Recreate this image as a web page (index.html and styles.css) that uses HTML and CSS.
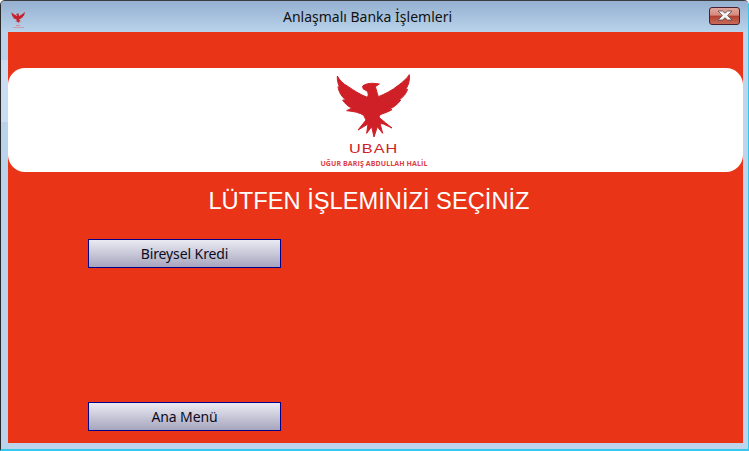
FILE: index.html
```html
<!DOCTYPE html>
<html lang="en">
<head>
  <meta charset="UTF-8">
  <title>Anlaşmalı Banka İşlemleri</title>
  <link rel="stylesheet" href="styles.css">
</head>
<body>
  <svg class="defs" width="0" height="0">
    <!-- eagle from the logo, used in the banner and the title bar -->
    <symbol id="eagle" viewBox="0 0 255 210">
      <path d="M22 18 C28 30 40 42 55 50 C70 60 90 74 112 82 C116 76 115 70 112 64 L99 56 L98 48 C104 42 120 39 130 40 L148 42 L136 50 C139 58 141 68 145 80 C165 72 185 62 205 46 C218 36 230 26 238 14 C240 30 236 46 226 60 L233 58 C228 72 218 84 206 90 L212 90 C204 102 192 112 178 117 L186 119 C174 126 160 130 150 134 L147 142 L166 158 L186 174 L160 162 L150 160 L158 190 L142 170 L132 201 L125 170 L110 190 L114 162 L84 180 L108 150 L101 136 C90 128 72 124 50 122 L66 114 C54 110 44 100 38 90 L48 90 C36 82 26 66 24 50 L30 54 C24 42 21 30 22 18 Z"/>
    </symbol>
  </svg>

  <div class="window">
    <div class="titlebar">
      <div class="app-icon">
        <svg class="app-eagle" aria-hidden="true"><use href="#eagle"/></svg>
        <span class="app-line"></span>
        <span class="app-line app-line-long"></span>
      </div>
      <div class="title">Anlaşmalı Banka İşlemleri</div>
      <div class="close">
        <svg width="16" height="11" viewBox="0 0 16 11">
          <path d="M1 1 H5.5 L8 3.2 L10.5 1 H15 L10.6 5.5 L15 10 H10.5 L8 7.8 L5.5 10 H1 L5.4 5.5 Z" fill="#f4f4f4" stroke="#5a4a50" stroke-width="0.8"/>
        </svg>
      </div>
    </div>

    <div class="frame">
      <div class="content">
        <div class="banner">
          <svg class="logo-eagle" aria-hidden="true"><use href="#eagle"/></svg>
          <div class="logo-name">UBAH</div>
          <div class="logo-sub">UĞUR BARIŞ ABDULLAH HALİL</div>
        </div>

        <h1 class="heading">LÜTFEN İŞLEMİNİZİ SEÇİNİZ</h1>

        <button class="btn">Bireysel Kredi</button>
        <button class="btn btn-bottom">Ana Menü</button>
      </div>
    </div>
  </div>
</body>
</html>
```

FILE: styles.css
```css
html, body {
  margin: 0;
  padding: 0;
  background: #fff;
}
body {
  width: 749px;
  height: 451px;
  overflow: hidden;
  font-family: "Noto Sans", sans-serif;
}
.defs {
  display: block;
  height: 0;
}
.window {
  box-sizing: border-box;
  width: 749px;
  height: 451px;
  display: flex;
  flex-direction: column;
  border-top: 1px solid #3c3c3c;
  border-left: 1px solid #2a2a2a;
  border-right: 1px solid #35c8ea;
  border-bottom: 2px solid #35c8ea;
  border-top-left-radius: 5px;
  border-top-right-radius: 5px;
  background: #bdd4ec;
}

/* Title bar */
.titlebar {
  height: 31px;
  flex: none;
  display: flex;
  align-items: center;
  padding: 0 8px 0 7px;
  background: linear-gradient(#95b0d0, #b9d3eb);
  border-top-left-radius: 4px;
  border-top-right-radius: 4px;
}
.app-icon {
  width: 20px;
  margin-top: 6px;
  display: flex;
  flex-direction: column;
  align-items: center;
  gap: 1px;
}
.app-eagle {
  width: 16px;
  height: 13px;
  fill: #c8202c;
}
.app-line {
  display: block;
  width: 4px;
  height: 1px;
  background: #d98a98;
}
.app-line-long {
  width: 11px;
  background: #cf9aae;
}
.title {
  flex: 1;
  text-align: center;
  font-size: 14px;
  color: #111;
  padding-right: 2px;
}
.close {
  box-sizing: border-box;
  width: 31px;
  height: 18px;
  margin-top: -2px;
  display: flex;
  align-items: center;
  justify-content: center;
  border: 1px solid #4a2030;
  border-radius: 3px;
  background: linear-gradient(#e0a59c 0%, #d58a7e 45%, #b0402f 50%, #c96a5a 100%);
}

/* Frame around the red content */
.frame {
  flex: 1;
  min-height: 0;
  display: flex;
  padding: 0 5px 6px 7px;
  background: linear-gradient(#bad3ec 28px, #c9dcf1 28px, #c9dcf1 90px, #bad3ec 90px) no-repeat left / 7px 100%;
}
.content {
  flex: 1;
  display: flex;
  flex-direction: column;
  padding: 36px 0 12px;
  background: #e93417;
}

.banner {
  height: 104px;
  flex: none;
  display: flex;
  flex-direction: column;
  align-items: center;
  padding-right: 6px;
  background: #fff;
  border-radius: 17px;
}
.logo-eagle {
  width: 85px;
  height: 70px;
  margin-top: 2px;
  flex: none;
  fill: #cf2027;
  stroke: #cf2027;
  stroke-width: 3px;
  stroke-linejoin: round;
}
.logo-name {
  margin: 1px 0 0 3px;
  font-family: "Liberation Sans", sans-serif;
  font-size: 13px;
  line-height: 15px;
  letter-spacing: 0.8px;
  transform: scaleX(1.25);
  color: #cf2027;
}
.logo-sub {
  margin: 3px 0 0 3px;
  font-family: "Open Sans", sans-serif;
  font-weight: 700;
  font-size: 7px;
  line-height: 9px;
  letter-spacing: 0.1px;
  color: #dc4044;
}

.heading {
  margin: 15px 0 24px;
  padding-right: 13px;
  text-align: center;
  font-family: "Liberation Sans", sans-serif;
  font-weight: 400;
  font-size: 23.7px;
  line-height: 28px;
  color: #fff;
}

.btn {
  box-sizing: border-box;
  flex: none;
  width: 193px;
  height: 29px;
  margin-left: 80px;
  padding: 0;
  border: 1px solid #00008b;
  background: linear-gradient(#ebebf4, #a6a5bd);
  font-family: "Noto Sans", sans-serif;
  font-size: 14px;
  letter-spacing: -0.1px;
  color: #0b0b1e;
}
.btn-bottom {
  margin-top: auto;
}
```
